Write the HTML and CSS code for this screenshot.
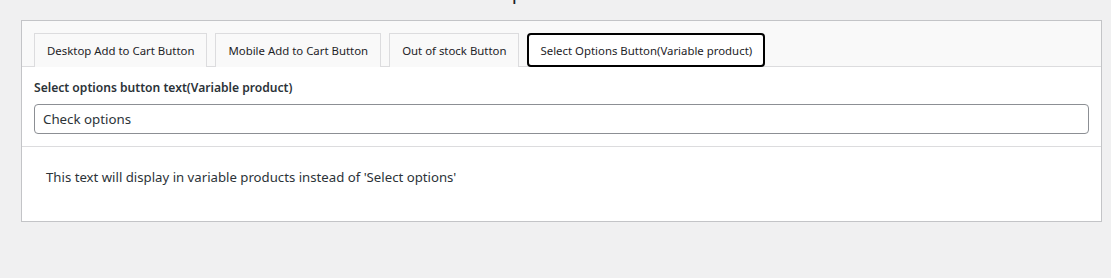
FILE: index.html
```
<!DOCTYPE html>
<html lang="en">
<head>
<meta charset="utf-8">
<title>Button texts</title>
<link rel="stylesheet" href="styles.css">
</head>
<body>
<div class="page_head">
	<h1 class="page_title">Setup</h1>
</div>
<div class="panel">
	<ul class="tab_menu">
		<li><a href="">Desktop Add to Cart Button</a></li>
		<li><a href="">Mobile Add to Cart Button</a></li>
		<li><a href="">Out of stock Button</a></li>
		<li class="on"><a href="">Select Options Button(Variable product)</a></li>
	</ul>
	<div class="field">
		<label class="field_label" for="select_text">Select options button text(Variable product)</label>
		<input class="field_input" id="select_text" type="text" value="Check options">
	</div>
	<p class="field_desc">This text will display in variable products instead of 'Select options'</p>
</div>
</body>
</html>
```
FILE: styles.css
```
* {margin:0; padding:0; box-sizing:border-box}
li {list-style:none}
body {
	background-color:#f0f0f1;
	font-family:"Noto Sans", "Open Sans", sans-serif;
	color:#1d2327;
}

.page_head {
	height:20px;
	overflow:hidden;
	padding-left:470px;
}
.page_title {
	font-size:20px;
	font-weight:400;
	line-height:26px;
	margin-top:-21px;
	color:#1d2327;
}

.panel {
	width:1081px;
	margin-left:21px;
	background-color:#fff;
	border:1px solid #c3c4c7;
}
.tab_menu {
	display:flex;
	gap:8px;
	padding:12px 12px 0;
	background-color:#f9f9f9;
	border-bottom:1px solid #dcdcde;
}
.tab_menu > li {
	margin-bottom:-1px;
}
.tab_menu > li > a {
	display:block;
	height:34px;
	padding:0 12px;
	line-height:33px;
	font-size:11.4px;
	color:#1d2327;
	text-decoration:none;
	background-color:#f9f9f9;
	border:1px solid #dcdcde;
	border-bottom:none;
}
.tab_menu > li.on > a {
	background-color:#fff;
	border:2px solid #000;
	border-radius:4px;
	line-height:31px;
	padding:0 11px;
}

.field {
	padding:12px 12px;
	border-bottom:1px solid #dcdcde;
}
.field_label {
	display:block;
	font-size:12.1px;
	font-weight:600;
	line-height:18px;
	margin-bottom:7px;
	color:#2c3338;
}
.field_input {
	display:block;
	width:100%;
	height:30px;
	padding:0 8px;
	font-family:inherit;
	font-size:13.3px;
	color:#2c3338;
	border:1px solid #8c8f94;
	border-radius:4px;
	background-color:#fff;
}
.field_desc {
	padding:20px 24px 34px;
	font-size:13.2px;
	line-height:20px;
	color:#2c3338;
}
```
